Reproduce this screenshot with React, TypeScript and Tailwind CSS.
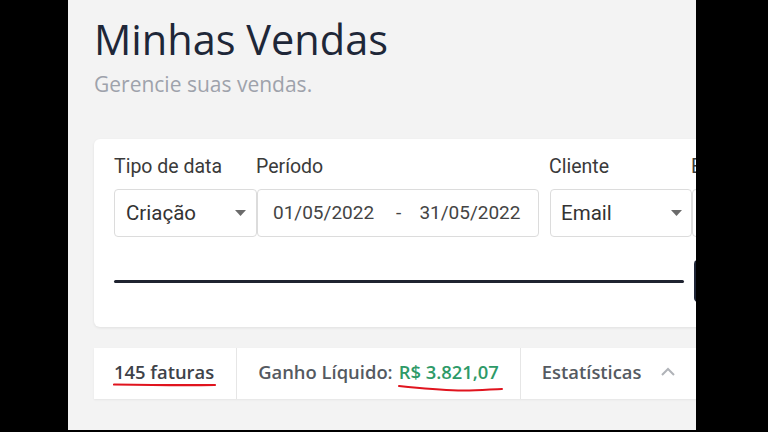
import React from 'react';

const Caret: React.FC = () => (
  <svg width="11" height="6" viewBox="0 0 11 6" className="shrink-0">
    <path d="M0 0 L11 0 L5.5 6 Z" fill="#6b6b6b" />
  </svg>
);

const App: React.FC = () => {
  return (
    <div className="w-[768px] h-[432px] bg-black flex flex-col overflow-hidden">
      <div className="flex h-[430px]">
        {/* faixa preta esquerda */}
        <div className="w-[68px] shrink-0 bg-black"></div>

        {/* conteúdo */}
        <main className="w-[628px] shrink-0 bg-[#f3f3f3] overflow-hidden pl-[26px]">
          {/* título */}
          <div className="pt-[15px]" style={{ fontFamily: '"Open Sans", sans-serif' }}>
            <h1 className="text-[41.5px] leading-[48px] text-[#1e2738]">Minhas Vendas</h1>
            <p className="text-[21px] leading-[26px] text-[#9ea2ab] mt-[8px]">Gerencie suas vendas.</p>
          </div>

          {/* filtros */}
          <div
            className="mt-[42px] w-[720px] bg-white rounded-[6px] shadow-[0_1px_3px_rgba(0,0,0,0.08)] pl-[20px] pt-[16px] pb-[25px]"
            style={{ fontFamily: 'Roboto, sans-serif' }}
          >
            <div className="flex">
              <div className="w-[143px] shrink-0">
                <div className="text-[19.5px] leading-[24px] text-[#3a3a3a] mb-[10px]">Tipo de data</div>
                <div className="h-[48px] border border-[#dcdcdc] rounded-[4px] flex items-center justify-between pl-[11px] pr-[10px]">
                  <span className="text-[20.5px] text-[#333]">Criação</span>
                  <Caret />
                </div>
              </div>
              <div className="w-[282px] shrink-0">
                <div className="text-[19.5px] leading-[24px] text-[#3a3a3a] mb-[10px] -ml-px">Período</div>
                <div className="h-[48px] border border-[#dcdcdc] rounded-[4px] flex items-center pl-[15px] text-[19px] text-[#444]">
                  <span>01/05/2022</span>
                  <span className="ml-[22px]">-</span>
                  <span className="ml-[18px]">31/05/2022</span>
                </div>
              </div>
              <div className="w-[142px] shrink-0 ml-[11px]">
                <div className="text-[19.5px] leading-[24px] text-[#3a3a3a] mb-[10px] -ml-px">Cliente</div>
                <div className="h-[48px] border border-[#dcdcdc] rounded-[4px] flex items-center justify-between pl-[10px] pr-[9px]">
                  <span className="text-[20.5px] text-[#333]">Email</span>
                  <Caret />
                </div>
              </div>
              <div className="w-[140px] shrink-0">
                <div className="text-[19.5px] leading-[24px] text-[#3a3a3a] mb-[10px] -ml-px">Email</div>
                <div className="h-[48px] border border-[#dcdcdc] rounded-[4px]"></div>
              </div>
            </div>

            <div className="flex items-center mt-[23px]">
              <div className="w-[570px] h-[3px] bg-[#1f2330] rounded-full"></div>
              <div className="ml-[10px] w-[80px] h-[42px] bg-[#1e2536] rounded-[4px]"></div>
            </div>
          </div>

          {/* resumo */}
          <div
            className="mt-[21px] w-[640px] h-[51px] bg-white shadow-[0_1px_2px_rgba(0,0,0,0.06)] flex items-stretch text-[18.4px] font-semibold text-[#555a61]"
            style={{ fontFamily: '"Open Sans", sans-serif' }}
          >
            <div className="relative flex items-center pb-[3px] pl-[20px] pr-[22px] border-r border-[#e6e6e6]">
              <span className="text-[#3e4249]">145 faturas</span>
              <svg className="absolute left-[19px] top-[34px]" width="104" height="6" viewBox="0 0 104 6">
                <path d="M1 2.5 C 30 3, 70 3.5, 102 3" stroke="#e0141e" strokeWidth="2.2" fill="none" strokeLinecap="round" />
              </svg>
            </div>
            <div className="relative flex items-center pb-[3px] pl-[21px] pr-[21px] border-r border-[#e6e6e6]">
              <span>Ganho Líquido:</span>
              <span className="ml-[6px] text-[#2e9a68]">R$ 3.821,07</span>
              <svg className="absolute left-[161px] top-[36px]" width="106" height="10" viewBox="0 0 106 10">
                <path d="M1 2 C 20 4, 40 6, 60 6.5 C 80 7, 95 5, 104 5" stroke="#e0141e" strokeWidth="2" fill="none" strokeLinecap="round" />
              </svg>
            </div>
            <div className="flex items-center pb-[3px] pl-[21px]">
              <span>Estatísticas</span>
              <svg className="ml-[18px]" width="16" height="10" viewBox="0 0 16 10">
                <path d="M2 8 L8 2 L14 8" stroke="#b0b3b8" strokeWidth="2" fill="none" />
              </svg>
            </div>
          </div>
        </main>

        {/* faixa preta direita */}
        <div className="flex-1 bg-black"></div>
      </div>
    </div>
  );
};

export default App;
